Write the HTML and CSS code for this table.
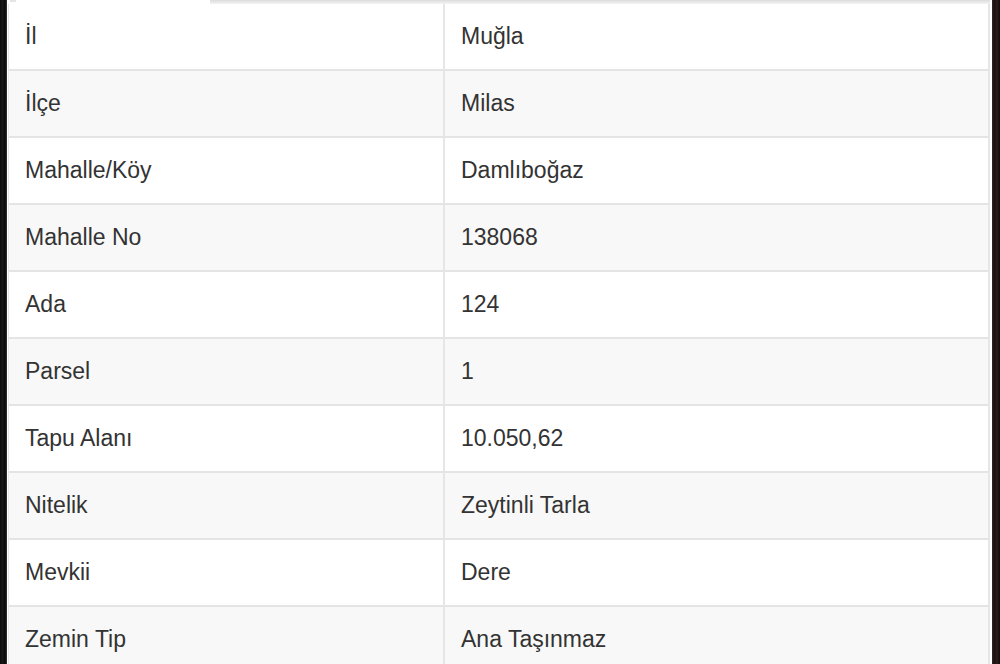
FILE: index.html
```html
<!DOCTYPE html>
<html lang="tr">
<head>
<meta charset="utf-8">
<title>Parsel Bilgileri</title>
<link rel="stylesheet" href="styles.css">
</head>
<body>
<div class="frame">
  <div class="edge edge-left"></div>
  <main class="panel">
    <div class="tabbar">
      <div class="tab"><span class="tab-mark"></span></div>
      <div class="tab-rest"></div>
    </div>
    <table class="info">
      <colgroup><col class="c1"><col class="c2"></colgroup>
      <tbody>
        <tr><td>İl</td><td>Muğla</td></tr>
        <tr><td>İlçe</td><td>Milas</td></tr>
        <tr><td>Mahalle/Köy</td><td>Damlıboğaz</td></tr>
        <tr><td>Mahalle No</td><td>138068</td></tr>
        <tr><td>Ada</td><td>124</td></tr>
        <tr><td>Parsel</td><td>1</td></tr>
        <tr><td>Tapu Alanı</td><td>10.050,62</td></tr>
        <tr><td>Nitelik</td><td>Zeytinli Tarla</td></tr>
        <tr><td>Mevkii</td><td>Dere</td></tr>
        <tr><td>Zemin Tip</td><td>Ana Taşınmaz</td></tr>
      </tbody>
    </table>
  </main>
  <div class="edge edge-right"></div>
</div>
</body>
</html>
```
FILE: styles.css
```css
html, body {
  margin: 0;
  padding: 0;
  height: 100%;
  background: #111;
}
.frame {
  display: flex;
  width: 1000px;
  height: 664px;
  overflow: hidden;
}
.edge {
  flex: none;
}
.edge-left {
  width: 7px;
  background: linear-gradient(to right, #0c0c0c 0, #1a1a1a 3px, #050505 5px, #3a3a3a 7px);
}
.edge-right {
  width: 8px;
  background: linear-gradient(to right, #3a2a2a 0, #1c1010 2px, #2a1c1c 5px, #120a0a 8px);
}
.panel {
  flex: 1;
  background: #fff;
  overflow: hidden;
}
.tabbar {
  display: flex;
  height: 4px;
}
.tab {
  width: 203px;
  background: #fff;
  position: relative;
}
.tab-mark {
  position: absolute;
  left: 3px;
  top: 0;
  width: 6px;
  height: 2px;
  background: #e4e4e4;
}
.tab-rest {
  flex: 1;
  background: linear-gradient(to bottom, #dcdcdc 0, #e8e8e8 2px, #f4f4f4 4px);
  margin-right: 2px;
}
.info {
  margin-left: 1px;
  width: 982px;
  table-layout: fixed;
  border-collapse: separate;
  border-spacing: 0;
  border-left: 1px solid #e6e6e6;
  border-right: 2px solid #e6e6e6;
  font-family: "Liberation Sans", Arial, sans-serif;
  font-size: 23px;
  color: #333;
}
.c1 { width: 436px; }
.info td {
  height: 65px;
  padding: 0 16px;
  border-bottom: 2px solid #e4e4e4;
  vertical-align: middle;
  white-space: nowrap;
  box-sizing: border-box;
}
.info td:first-child {
  border-right: 2px solid #e6e6e6;
  padding-left: 16px;
}
.info td { height: 67px; }
.info tr:nth-child(even) td {
  background: #f8f8f8;
}
```
